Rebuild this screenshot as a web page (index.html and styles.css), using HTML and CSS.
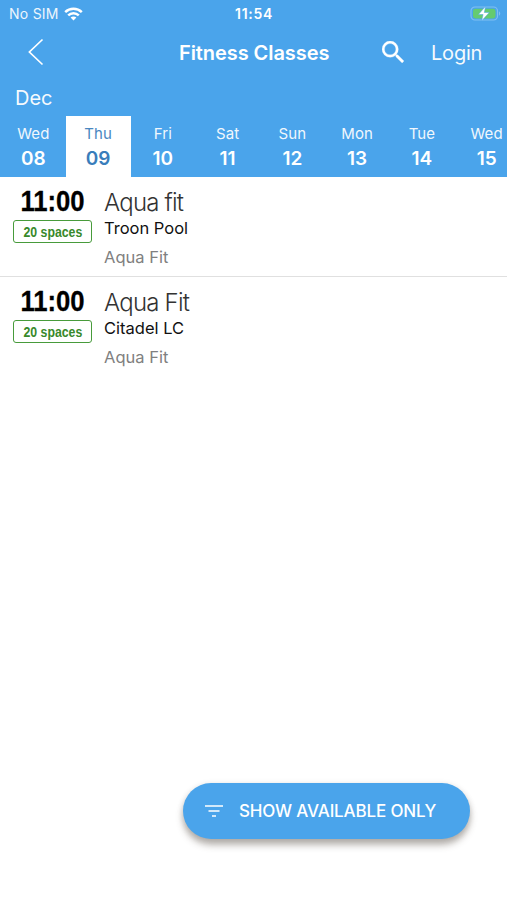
FILE: index.html
```html
<!DOCTYPE html>
<html lang="en">
<head>
<meta charset="utf-8">
<title>Fitness Classes</title>
<link rel="stylesheet" href="styles.css">
</head>
<body>
<div class="app">
  <header class="header">
    <div class="status">
      <div class="carrier">
        <span class="carrier-name">No SIM</span>
        <svg class="wifi" viewBox="0 0 19 14" width="19" height="14"><g fill="none" stroke="#fff" stroke-width="2.5"><path d="M1.2 5.1C5.8.7 13.2.7 17.8 5.1"/><path d="M4.2 8.4C7.2 5.5 11.8 5.5 14.8 8.4"/></g><path d="M6.6 10.6C8.2 9.2 10.8 9.2 12.4 10.6L9.5 13.6Z" fill="#fff"/></svg>
      </div>
      <span class="clock">11:54</span>
      <svg class="battery" viewBox="0 0 32 16" width="32" height="16"><rect x="1" y="1" width="26.5" height="13" rx="4" fill="none" stroke="#80bff2" stroke-width="1.2"/><path d="M29 5.3C30.7 6 30.7 9 29 9.7Z" fill="#80bff2"/><rect x="3" y="2.8" width="22.5" height="9.6" rx="2.4" fill="#65cb70"/><path d="M15.6.3 8.4 8.5h4.7l-1.4 6.2L19.3 6.5h-5Z" fill="#fff" stroke="#4aa4eb" stroke-width=".5"/></svg>
    </div>
    <nav class="nav">
      <svg class="back" viewBox="0 0 16 28" width="16" height="28"><path d="M14.5 1.5 1.4 14 14.5 26.5" fill="none" stroke="#fff" stroke-width="1.7"/></svg>
      <h1 class="title">Fitness Classes</h1>
      <svg class="search" viewBox="3 3 17.5 17.5" width="22" height="22"><path fill="#fff" stroke="#fff" stroke-width=".2" d="M15.5 14h-.79l-.28-.27A6.471 6.471 0 0 0 16 9.5 6.5 6.5 0 1 0 9.5 16c1.61 0 3.09-.59 4.23-1.57l.27.28v.79l5 4.99L20.49 19l-4.99-5zm-6 0C7.01 14 5 11.99 5 9.5S7.01 5 9.5 5 14 7.01 14 9.5 11.99 14 9.5 14z"/></svg>
      <span class="login">Login</span>
    </nav>
    <div class="month">Dec</div>
    <div class="days">
      <div class="day"><span class="name">Wed</span><b>08</b></div>
      <div class="day selected"><span class="name">Thu</span><b>09</b></div>
      <div class="day"><span class="name">Fri</span><b>10</b></div>
      <div class="day"><span class="name">Sat</span><b>11</b></div>
      <div class="day"><span class="name">Sun</span><b>12</b></div>
      <div class="day"><span class="name">Mon</span><b>13</b></div>
      <div class="day"><span class="name">Tue</span><b>14</b></div>
      <div class="day"><span class="name">Wed</span><b>15</b></div>
    </div>
  </header>
  <main class="list">
    <article class="row">
      <div class="slot"><span class="time">11:00</span><span class="spaces"><span class="narrow">20 spaces</span></span></div>
      <div class="info"><h2>Aqua fit</h2><span class="place">Troon Pool</span><span class="type">Aqua Fit</span></div>
    </article>
    <article class="row last">
      <div class="slot"><span class="time">11:00</span><span class="spaces"><span class="narrow">20 spaces</span></span></div>
      <div class="info"><h2>Aqua Fit</h2><span class="place">Citadel LC</span><span class="type">Aqua Fit</span></div>
    </article>
  </main>
  <button class="filter">
    <svg viewBox="0 0 18 12" width="18" height="12"><path d="M0 1h18M3.5 6h11M7 11h4" stroke="#fff" stroke-width="1.6"/></svg>
    <span>SHOW AVAILABLE ONLY</span>
  </button>
</div>
</body>
</html>
```
FILE: styles.css
```css
* { box-sizing: border-box; }
body { margin: 0; background: #fff; font-family: Inter, "Liberation Sans", sans-serif; color: #111; }
h1, h2 { margin: 0; }
.app { height: 900px; display: flex; flex-direction: column; overflow: hidden; }
.header { height: 177px; background: #4aa4eb; color: #fff; overflow: hidden; flex: none; }
.status { height: 28px; display: grid; grid-template-columns: 1fr auto 1fr; align-items: center; padding: 0 5px 0 9px; }
.carrier { display: flex; align-items: center; gap: 5px; }
.carrier-name { font-size: 14px; line-height: 18px; letter-spacing: 0.25px; opacity: .9; }
.wifi { margin-top: -1px; }
.clock { font-size: 14px; line-height: 18px; font-weight: 600; letter-spacing: 0.7px; margin-right: 3px; }
.battery { justify-self: end; }
.nav { height: 48px; display: flex; align-items: center; padding-left: 28px; }
.title { margin: 2px 0 0 135px; width: 151px; white-space: nowrap; font-size: 20px; line-height: 26px; font-weight: 600; letter-spacing: -0.07px; }
.search { margin-left: 52px; flex: none; }
.login { margin: 2px 0 0 27px; font-size: 20px; line-height: 26px; letter-spacing: -0.2px; opacity: .95; }
.month { height: 40px; padding-left: 15px; font-size: 20px; line-height: 44px; opacity: .95; }
.days { display: flex; width: 519px; padding-left: 1px; }
.day { flex: 1; height: 61px; display: flex; flex-direction: column; align-items: center; padding-top: 8px; }
.day .name { font-size: 15px; line-height: 20px; opacity: .92; letter-spacing: 0.1px; }
.day b { font-size: 19px; line-height: 26px; font-weight: 600; margin-top: 2px; }
.selected { background: #fff; color: #3a7dbb; }
.row { height: 100px; display: flex; padding-left: 13px; border-bottom: 1px solid #e0e0e0; }
.last { border-bottom: 0; }
.slot { width: 79px; display: flex; flex-direction: column; align-items: center; font-family: "Liberation Sans Narrow", "Liberation Sans", sans-serif; font-weight: 700; }
.time { margin-top: 7px; font-size: 30px; line-height: 34px; color: #000; white-space: nowrap; transform: scaleX(.855); -webkit-text-stroke: .3px #000; }
.spaces { width: 79px; height: 23px; margin-top: 2px; border: 1.5px solid #489b3b; border-radius: 3px; display: flex; justify-content: center; font-size: 15px; line-height: 21px; color: #38892b; white-space: nowrap; }
.narrow { transform: scaleX(.82); }
.info { margin-left: 12px; display: flex; flex-direction: column; }
.info h2 { margin-top: 10px; font-size: 24px; line-height: 32px; font-weight: 300; color: #333; letter-spacing: -0.8px; }
.place { font-size: 16.5px; line-height: 21px; margin-top: -1px; }
.type { font-size: 16.5px; line-height: 22px; margin-top: 7px; color: #808080; }
.filter { width: 287px; height: 56px; margin: auto 37px 61px auto; border: 0; border-radius: 28px; background: #4aa4eb; color: #fff; display: flex; align-items: center; padding: 0 0 0 22px; gap: 16px; font: 500 17px/22px Inter, sans-serif; letter-spacing: -0.15px; white-space: nowrap; box-shadow: 0 6px 7px rgba(70,60,50,.38), 0 1px 6px rgba(0,0,0,.1); }
```
